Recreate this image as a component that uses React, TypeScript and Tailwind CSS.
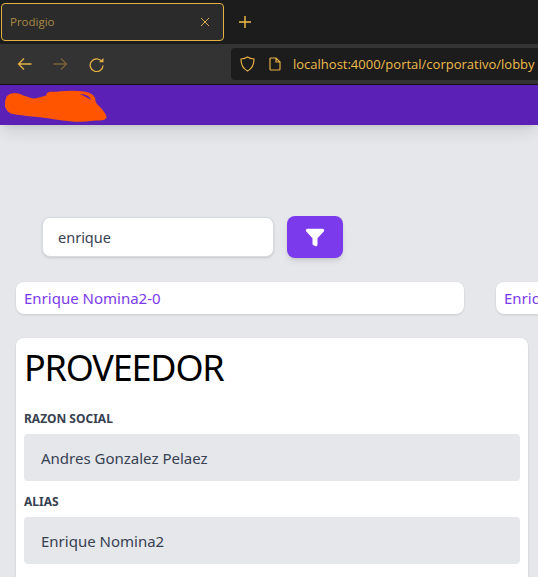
import { Filter } from "lucide-react";

const gold = "#e5b143";

function BrowserChrome() {
  return (
    <div className="font-['Noto_Sans',sans-serif]">
      {/* Tab strip */}
      <div className="h-[44px] bg-[#1c1c1c] flex items-center pl-[1px]">
        <div className="w-[223px] h-[38px] rounded-[4px] border border-[#e5b143] bg-[#2b2b2b] flex items-center justify-between pl-[8px] pr-[13px]">
          <span className="text-[11.5px] text-[#a98a45] font-['Open_Sans',sans-serif]">Prodigio</span>
          <svg className="shrink-0" width="10" height="10" viewBox="0 0 10 10" stroke="#d9ad4c" strokeWidth="1" fill="none">
            <path d="M1 1l8 8M9 1l-8 8" />
          </svg>
        </div>
        <svg className="ml-[14px] shrink-0" width="14" height="14" viewBox="0 0 14 14" stroke="#f2bf45" strokeWidth="1.4" fill="none">
          <path d="M7 1v12M1 7h12" />
        </svg>
      </div>

      {/* Toolbar */}
      <div className="h-[40px] bg-[#333333] flex items-center pl-[17px]">
        <svg className="shrink-0" width="15" height="14" viewBox="0 0 15 14" stroke={gold} strokeWidth="1.3" fill="none">
          <path d="M14.500 7H1.500M7 1.500L1.500 7L7 12.500" />
        </svg>
        <svg className="ml-[21px] shrink-0" width="15" height="14" viewBox="0 0 15 14" stroke="#7a6338" strokeWidth="1.3" fill="none">
          <path d="M0.500 7H13.500M8 1.500L13.500 7L8 12.500" />
        </svg>
        <svg className="ml-[21px] shrink-0" width="15" height="15" viewBox="0 0 15 15" fill="none">
          <path d="M12.600 4.200A6.400 6.400 0 1 0 14 8.500" stroke={gold} strokeWidth="1.3" />
          <path d="M10 5.200L14.500 1v4.200z" fill={gold} />
        </svg>
        <div className="ml-[127px] flex-1 min-w-0 h-[32px] bg-[#1c1c1c] rounded-l-[4px] flex items-center pl-[9px] overflow-hidden">
          <svg className="shrink-0" width="15" height="16" viewBox="0 0 15 16" stroke={gold} strokeWidth="1.2" fill="none">
            <path d="M7.500 1C5.500 2.400 3.200 2.900 1 3c0 5.500 1.500 9.500 6.500 12C12.500 12.500 14 8.500 14 3c-2.200-.1-4.500-.6-6.500-2z" />
          </svg>
          <svg className="ml-[14px] shrink-0" width="12" height="14" viewBox="0 0 12 14" stroke={gold} strokeWidth="1.2" fill="none">
            <path d="M1 2a1 1 0 0 1 1-1h5l4 4v7a1 1 0 0 1-1 1H2a1 1 0 0 1-1-1zM7 1v4h4" />
          </svg>
          <span className="ml-[12px] pt-[1px] text-[13px] whitespace-nowrap text-[#efbb4c] font-['Open_Sans',sans-serif]">
            localhost:4000/portal/corporativo/lobby
          </span>
        </div>
      </div>
      <div className="h-[1px] bg-[#111111]" />
    </div>
  );
}

export default function App() {
  return (
    <div className="w-[538px] h-[577px] overflow-hidden bg-[#e5e7eb] font-['Noto_Sans',sans-serif]">
      <BrowserChrome />

      {/* App header, logo is scribbled out in the picture */}
      <div className="h-[40px] bg-[#5b21b6] flex items-center pl-[5px] shadow-lg">
        <svg className="shrink-0" width="103" height="33" viewBox="5 89 103 33">
          <path
            fill="#ff5500"
            stroke="#ff5500"
            strokeWidth="3"
            strokeLinejoin="round"
            d="M8 97C11 94 14 94 18 95C24 97 30 100 35 100C40 99 45 98 48 96C47 93 50 93 58 93C68 92 78 92 84 93C90 94 94 97 94 101C94 105 97 106 100 109C102 112 105 115 105 117C105 119 100 119 96 119C88 120 80 121 72 120C60 119 50 117 42 116C32 115 20 114 11 112C7 110 5 105 7 100Z"
          />
          <path fill="#5b21b6" d="M80 94C85 94 90 96 91 100C88 98 84 96 80 94Z" />
        </svg>
      </div>

      {/* Search */}
      <div className="mt-[91px] ml-[42px] flex items-center gap-[13px]">
        <div className="w-[232px] h-[40px] bg-white rounded-[8px] border border-[#d8dae2] shadow-sm flex items-center pl-[15px] pt-[2px] text-[14.5px] text-[#374151]">
          enrique
        </div>
        <button className="w-[56px] h-[42px] bg-[#7c3aed] rounded-[8px] shadow-md flex items-center justify-center">
          <Filter size={20} fill="white" stroke="white" strokeWidth={2} />
        </button>
      </div>

      {/* Results */}
      <div className="mt-[24px] ml-[16px] flex gap-[32px] w-[700px]">
        <div className="w-[448px] h-[32px] bg-white rounded-[8px] shadow-sm flex items-center pl-[8px] text-[15px] text-[#7c3aed]">
          Enrique Nomina2-0
        </div>
        <div className="w-[200px] h-[32px] bg-white rounded-[8px] shadow-sm flex items-center pl-[8px] text-[15px] text-[#7c3aed]">
          Enrique Nomina2-1
        </div>
      </div>

      {/* Detail card */}
      <div className="mt-[24px] ml-[16px] w-[512px] h-[300px] bg-white rounded-[8px] shadow-sm px-[8px] pt-[6px]">
        <h1 className="text-[36px] leading-[48px] tracking-[-1.200px] text-black">PROVEEDOR</h1>
        <div className="mt-[19px] text-[12px] leading-[16px] font-bold text-[#374151]">RAZON SOCIAL</div>
        <div className="mt-[7px] h-[47px] bg-[#e5e7eb] rounded-[4px] flex items-center pl-[17px] pt-[2px] text-[15px] text-[#374151]">
          Andres Gonzalez Pelaez
        </div>
        <div className="mt-[13px] text-[12px] leading-[16px] font-bold text-[#374151]">ALIAS</div>
        <div className="mt-[7px] h-[47px] bg-[#e5e7eb] rounded-[4px] flex items-center pl-[17px] pt-[2px] text-[15px] text-[#374151]">
          Enrique Nomina2
        </div>
      </div>
    </div>
  );
}
